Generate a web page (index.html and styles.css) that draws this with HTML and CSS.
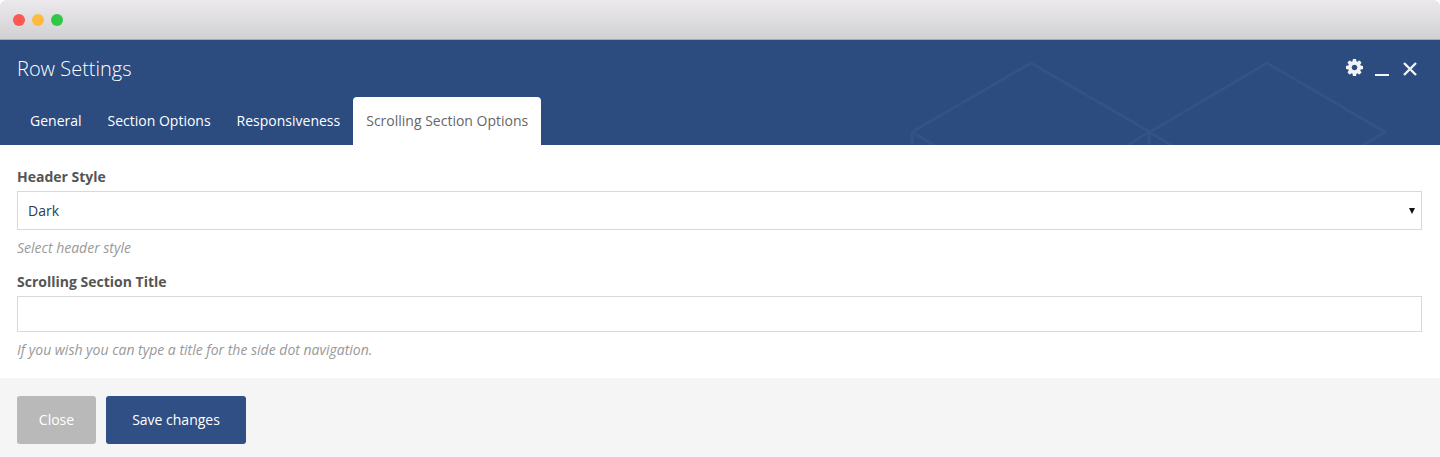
FILE: index.html
```html
<!DOCTYPE html>
<html lang="en">
<head>
    <meta charset="UTF-8">
    <title>Row Settings</title>
    <link rel="stylesheet" href="styles.css">
</head>
<body>
    <div class="window-bar">
        <span class="dot dot-red"></span>
        <span class="dot dot-yellow"></span>
        <span class="dot dot-green"></span>
    </div>

    <div class="modal-header">
        <!-- background pattern -->
        <svg class="header-pattern" width="1440" height="105" viewBox="0 0 1440 105">
            <path d="M912 92 L1031 23 L1150 92 L1267 23 L1385 92 L1340 119 M912 92 V110 M912 92 L942 110 M1149 92 V110 M1149 92 L1120 110 M1149 92 L1179 110" fill="none" stroke="#325387" stroke-width="3"/>
        </svg>

        <div class="title-row">
            <h1>Row Settings</h1>
            <div class="header-icons">
                <svg class="gear" width="17" height="17" viewBox="128 128 1536 1536">
                    <path fill="#f1f3f7" d="M1152 896q0-106-75-181t-181-75-181 75-75 181 75 181 181 75 181-75 75-181zm512-109v222q0 12-8 23t-20 13l-185 28q-19 54-39 91 35 50 107 138 10 12 10 25t-9 23q-27 37-99 108t-94 71q-12 0-26-9l-138-108q-44 23-91 38-16 136-29 186-7 28-36 28h-222q-14 0-24.5-8.5t-11.5-21.5l-28-184q-49-16-90-37l-141 107q-10 9-25 9-14 0-25-11-126-114-165-168-7-10-7-23 0-12 8-23 15-21 51-66.5t54-70.5q-27-50-41-99l-183-27q-13-2-21-12.5t-8-23.5v-222q0-12 8-23t19-13l186-28q14-46 39-92-40-57-107-138-10-12-10-24 0-10 9-23 26-36 98.5-107.5t94.5-71.5q13 0 26 10l138 107q44-23 91-38 16-136 29-186 7-28 36-28h222q14 0 24.5 8.5t11.5 21.5l28 184q49 16 90 37l142-107q9-9 24-9 13 0 25 10 129 119 165 170 7 8 7 22 0 12-8 23-15 21-51 66.5t-54 70.5q26 50 41 98l183 28q13 2 21 12.5t8 23.5z"/>
                </svg>
                <span class="minimize"></span>
                <svg width="16" height="16" viewBox="0 0 16 16">
                    <path d="M2 2 L14 14 M14 2 L2 14" stroke="#f1f3f7" stroke-width="2.4" fill="none"/>
                </svg>
            </div>
        </div>

        <div class="tabs">
            <a class="tab">General</a>
            <a class="tab">Section Options</a>
            <a class="tab">Responsiveness</a>
            <a class="tab active">Scrolling Section Options</a>
        </div>
    </div>

    <div class="modal-body">
        <div class="field">
            <label>Header Style</label>
            <div class="select-wrap">
                <select class="select-input">
                    <option>Dark</option>
                    <option>Light</option>
                </select>
            </div>
            <p class="help">Select header style</p>
        </div>
        <div class="field">
            <label>Scrolling Section Title</label>
            <input class="text-input" type="text">
            <p class="help">If you wish you can type a title for the side dot navigation.</p>
        </div>
    </div>

    <div class="modal-footer">
        <button class="btn btn-close">Close</button>
        <button class="btn btn-save">Save changes</button>
    </div>
</body>
</html>
```

FILE: styles.css
```css
body {
    margin: 0;
    height: 457px;
    overflow: hidden;
    background-color: #ffffff;
    font-family: "Open Sans", sans-serif;
    font-size: 14px;
    color: #555;
}

/* window top bar */
.window-bar {
    height: 39px;
    border-bottom: 1px solid #a9a9ab;
    border-radius: 6px 6px 0 0;
    background: linear-gradient(to bottom, #ebe9ec, #d2d1d2);
    display: flex;
    align-items: center;
    padding-left: 13px;
    gap: 7px;
}

.dot {
    width: 12px;
    height: 12px;
    border-radius: 50%;
}

.dot-red { background-color: #fc5753; }
.dot-yellow { background-color: #fdbc40; }
.dot-green { background-color: #33c748; }

/* header */
.modal-header {
    position: relative;
    height: 105px;
    overflow: hidden;
    background-color: #2c4b7f;
}

.header-pattern {
    position: absolute;
    top: 0;
    left: 0;
}

.title-row {
    position: relative;
    height: 57px;
    padding: 0 22px 0 17px;
    display: flex;
    align-items: center;
    justify-content: space-between;
}

.title-row h1 {
    margin: 0;
    font-size: 20px;
    font-weight: 300;
    color: #ffffff;
}

.header-icons {
    display: flex;
    align-items: center;
    gap: 12px;
}

.gear {
    margin-bottom: 3px;
}

.minimize {
    width: 14px;
    height: 2px;
    margin: 13px 1px 0 0;
    background-color: #f1f3f7;
}

.tabs {
    position: relative;
    display: flex;
    margin-left: 17px;
}

.tab {
    height: 48px;
    padding: 0 13px;
    line-height: 48px;
    color: #ffffff;
    border-radius: 4px 4px 0 0;
}

.tab.active {
    background-color: #ffffff;
    color: #666;
}

/* form */
.modal-body {
    height: 233px;
    padding: 22px 18px 0 17px;
    box-sizing: border-box;
}

.field label {
    display: block;
    font-weight: 700;
    line-height: 20px;
    margin-bottom: 4px;
    color: #555;
}

.select-wrap {
    position: relative;
}

/* select arrow */
.select-wrap::after {
    content: "";
    position: absolute;
    top: 17px;
    right: 7px;
    border-left: 3.5px solid transparent;
    border-right: 3.5px solid transparent;
    border-top: 6px solid #111;
}

.select-input,
.text-input {
    display: block;
    width: 100%;
    box-sizing: border-box;
    border: 1px solid #d9d9d9;
    background-color: #ffffff;
    font-family: inherit;
    font-size: 14px;
    color: #2c3e50;
    border-radius: 0;
}

.select-input {
    height: 39px;
    padding-left: 10px;
    appearance: none;
}

.text-input {
    height: 36px;
}

.help {
    margin: 8px 0 14px;
    font-size: 14px;
    line-height: 20px;
    font-style: italic;
    color: #999;
}

/* footer */
.modal-footer {
    height: 79px;
    box-sizing: border-box;
    padding: 18px 17px;
    background-color: #f5f5f5;
    display: flex;
    gap: 10px;
}

.btn {
    height: 48px;
    padding: 0 0 2px;
    border: none;
    border-radius: 3px;
    font-family: inherit;
    font-size: 14px;
    color: #ffffff;
    cursor: pointer;
}

.btn-close {
    width: 79px;
    background-color: #b9b9b9;
}

.btn-save {
    width: 140px;
    background-color: #2f4f85;
}
```
